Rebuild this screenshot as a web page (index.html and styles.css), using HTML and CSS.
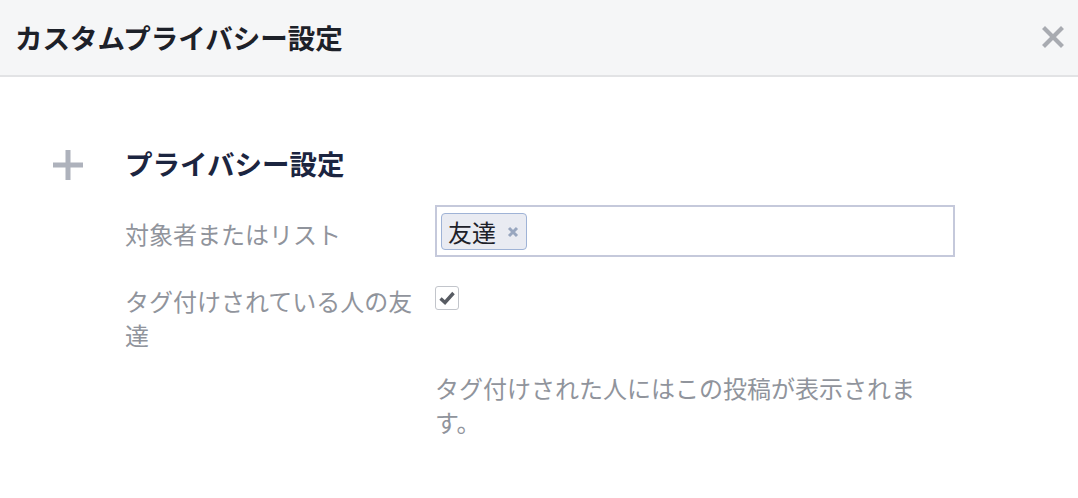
FILE: index.html
```html
<!DOCTYPE html>
<html lang="ja">
<head>
  <meta charset="UTF-8">
  <title>カスタムプライバシー設定</title>
  <link rel="stylesheet" href="styles.css">
</head>
<body>
  <div class="dialog">
    <div class="dialog-header">
      <h1 class="dialog-title">カスタムプライバシー設定</h1>
      <span class="close-btn" title="閉じる">
        <svg width="22" height="22" viewBox="0 0 22 22">
          <path d="M3 3 L19 19 M19 3 L3 19" stroke="#a8abb1" stroke-width="4.2" stroke-linecap="square"/>
        </svg>
      </span>
    </div>

    <div class="dialog-body">
      <div class="section-head">
        <span class="plus-icon">
          <svg width="30" height="30" viewBox="0 0 30 30">
            <path d="M0 12.5 H30 V17.5 H0 Z M12.5 0 H17.5 V30 H12.5 Z" fill="#aeb2bc"/>
          </svg>
        </span>
        <h2 class="section-title">プライバシー設定</h2>
      </div>

      <div class="form-row">
        <div class="form-label label-input">対象者またはリスト</div>
        <div class="form-field">
          <div class="token-input">
            <span class="token">友達<svg class="token-x" width="12" height="12" viewBox="0 0 12 12"><path d="M2 2 L10 10 M10 2 L2 10" stroke="#98a6bf" stroke-width="3"/></svg></span>
          </div>
        </div>
      </div>

      <div class="form-row row-check">
        <div class="form-label">タグ付けされている人の友達</div>
        <div class="form-field">
          <span class="checkbox checked">
            <svg width="18" height="16" viewBox="0 0 18 16">
              <path d="M2.5 8.5 L7 12.5 L15.5 3" fill="none" stroke="#585c63" stroke-width="3.4"/>
            </svg>
          </span>
        </div>
      </div>

      <div class="form-row row-help">
        <div class="form-label"></div>
        <div class="form-field">
          <p class="help-text">タグ付けされた人にはこの投稿が表示されます。</p>
        </div>
      </div>
    </div>
  </div>
</body>
</html>
```

FILE: styles.css
```css
body {
  font-family: "Noto Sans CJK JP", "Noto Sans", sans-serif;
  background-color: #ffffff;
  margin: 0;
}

.dialog {
  width: 1078px;
}

.dialog-header {
  height: 77px;
  background-color: #f5f6f7;
  border-bottom: 2px solid #e2e3e5;
  display: flex;
  align-items: center;
  justify-content: space-between;
  padding: 0 13px 2px 15px;
  box-sizing: border-box;
}

.dialog-title {
  margin: 0;
  font-size: 27.5px;
  font-weight: 700;
  color: #1d2129;
  line-height: 36px;
}

.close-btn {
  display: flex;
  width: 24px;
  height: 22px;
  align-items: center;
  justify-content: center;
  cursor: pointer;
}

.dialog-body {
  padding: 68px 0 40px 53px;
}

.section-head {
  display: flex;
  align-items: center;
  height: 36px;
}

.plus-icon {
  width: 72px;
  display: flex;
  margin-top: 4px;
}

.section-title {
  margin: 0;
  font-size: 27.5px;
  font-weight: 700;
  color: #1c2540;
  line-height: 36px;
}

.form-row {
  display: flex;
  gap: 14px;
  margin-left: 72px;
  margin-top: 24px;
  font-size: 24px;
  line-height: 34px;
}

.form-label {
  width: 296px;
  flex-shrink: 0;
  color: #90949c;
}

.label-input {
  padding-top: 12px;
}

.form-field {
  width: 520px;
}

.token-input {
  height: 52px;
  box-sizing: border-box;
  border: 2px solid #c5c9db;
  padding: 6px 4px;
  display: flex;
  align-items: flex-start;
}

.token {
  display: inline-flex;
  align-items: center;
  gap: 11px;
  height: 37px;
  box-sizing: border-box;
  padding: 0 7px 0 6px;
  background-color: #e9ebf2;
  border: 1px solid #9fb3d6;
  border-radius: 4px;
  color: #1d2129;
  font-size: 24px;
  line-height: 35px;
}

.token-x {
  cursor: pointer;
}

.row-check {
  margin-top: 27px;
}

.checkbox {
  display: flex;
  align-items: center;
  justify-content: center;
  width: 24px;
  height: 24px;
  box-sizing: border-box;
  margin-top: 2px;
  border: 1px solid #c2c5cb;
  border-radius: 3px;
  background-color: #fff;
}

.row-help {
  margin-top: 19px;
}

.help-text {
  margin: 0;
  max-width: 490px;
  color: #90949c;
}
```
